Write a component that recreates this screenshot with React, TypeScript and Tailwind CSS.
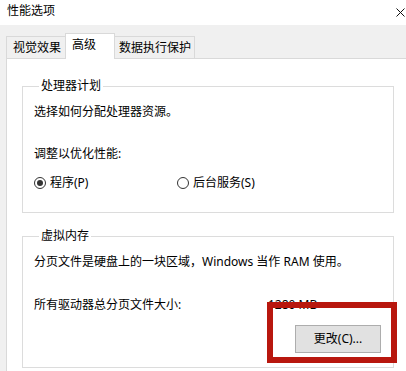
import React from 'react';

function Radio({ checked, label }: { checked?: boolean; label: string }) {
    return (
        <label className="flex items-center gap-[4px]">
            <span className="w-[12px] h-[12px] rounded-full border border-[#333333] bg-white flex items-center justify-center">
                {checked && <span className="w-[6px] h-[6px] rounded-full bg-[#333333]" />}
            </span>
            <span>{label}</span>
        </label>
    );
}

function Group({ title, className, children }: { title: string; className?: string; children: React.ReactNode }) {
    return (
        <fieldset className={`w-[372px] border border-[#dcdcdc] pl-[11px] ${className ?? ''}`}>
            <legend className="ml-[5px] px-[2px] leading-[16px]">{title}</legend>
            {children}
        </fieldset>
    );
}

export default function App() {
    return (
        <div className="relative w-[406px] h-[371px] overflow-hidden bg-[#f0f0f0] text-[12px] text-black font-['Noto_Sans','Noto_Sans_CJK_SC',sans-serif]">
            {/* title bar */}
            <div className="h-[25px] bg-white flex items-center justify-between pl-[7px]">
                <span className="leading-[16px] -mt-[4px]">性能选项</span>
                <svg width="9" height="9" viewBox="0 0 9 9" className="mr-[1px]">
                    <path d="M0.5 0.5 L8.5 8.5 M8.5 0.5 L0.5 8.5" stroke="#111" strokeWidth="1" />
                </svg>
            </div>

            <div className="pl-[6px] pt-[8px]">
                {/* tabs */}
                <div className="flex items-end h-[25px] leading-[16px]">
                    <div className="h-[22px] w-[60px] border border-b-0 border-[#d9d9d9] bg-[#f0f0f0] pl-[6px] pt-[3px]">视觉效果</div>
                    <div className="relative z-10 -mb-px h-[26px] w-[50px] border border-b-0 border-[#d9d9d9] bg-white pl-[6px] pt-[3px] -ml-px">高级</div>
                    <div className="h-[22px] w-[81px] border border-b-0 border-[#d9d9d9] bg-[#f0f0f0] pl-[4px] pt-[3px] -ml-px">数据执行保护</div>
                </div>

                {/* panel */}
                <div className="h-[320px] border border-r-0 border-[#d9d9d9] bg-white pl-[15px] pt-[19px] leading-[16px]">
                    <Group title="处理器计划" className="h-[135px]">
                        <p className="mt-[10px]">选择如何分配处理器资源。</p>
                        <p className="mt-[26px]">调整以优化性能:</p>
                        <div className="mt-[13px] flex">
                            <div className="w-[143px]"><Radio checked label="程序(P)" /></div>
                            <Radio label="后台服务(S)" />
                        </div>
                    </Group>

                    <Group title="虚拟内存" className="mt-[15px] h-[140px]">
                        <p className="mt-[10px]">分页文件是硬盘上的一块区域，Windows 当作 RAM 使用。</p>
                        <div className="mt-[27px] flex">
                            <span className="w-[234px]">所有驱动器总分页文件大小:</span>
                            <span>1280 MB</span>
                        </div>
                        <div className="mt-[12px] flex justify-end pr-[12px]">
                            <button className="w-[86px] h-[28px] border border-[#adadad] bg-[#e1e1e1] leading-[16px]">更改(C)...</button>
                        </div>
                    </Group>
                </div>
            </div>

            {/* highlight box */}
            <div className="absolute left-[267px] top-[302px] w-[130px] h-[61px] border-[6px] border-[#b8170e]" />
        </div>
    );
}
